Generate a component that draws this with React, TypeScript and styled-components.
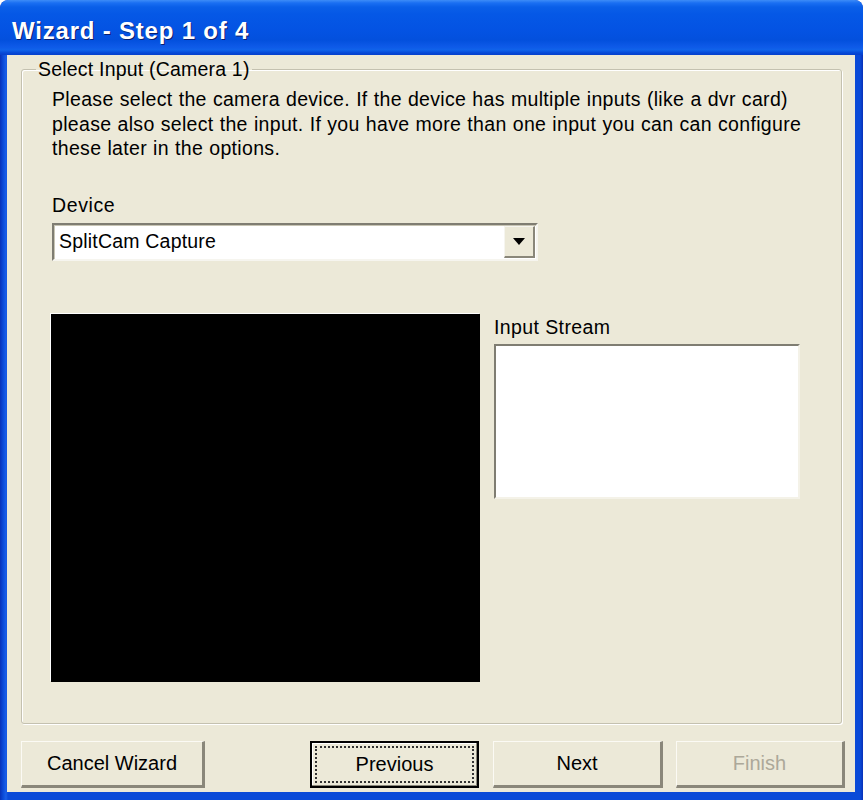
import { createGlobalStyle, styled } from "styled-components";

const GlobalStyle = createGlobalStyle`
  html, body {
    margin: 0;
    padding: 0;
    background: #ffffff;
  }
  body {
    font-family: "Liberation Sans", Arial, sans-serif;
  }
`;

const App = () => {
  return (
    <>
      <GlobalStyle />
      <Window>
        <TitleBar>
          <Title>Wizard - Step 1 of 4</Title>
        </TitleBar>
        <Body>
          <GroupBox>
            <Legend>Select Input (Camera 1)</Legend>
            <Intro>
              Please select the camera device. If the device has multiple inputs (like a dvr card)
              <br />
              please also select the input. If you have more than one input you can can configure
              <br />
              these later in the options.
            </Intro>
            <Label>Device</Label>
            <Combo>
              <ComboText>SplitCam Capture</ComboText>
              <DropButton>
                <svg width="12" height="7" viewBox="0 0 12 7">
                  <path d="M0 0 H12 L6 7 Z" fill="#000" />
                </svg>
              </DropButton>
            </Combo>
            <PreviewRow>
              <Preview />
              <StreamColumn>
                <StreamLabel>Input Stream</StreamLabel>
                <ListBox />
              </StreamColumn>
            </PreviewRow>
          </GroupBox>
          <ButtonRow>
            <Button $width={184}>Cancel Wizard</Button>
            <RightButtons>
              <Button $width={169} $default>
                <FocusRing>Previous</FocusRing>
              </Button>
              <Button $width={170}>Next</Button>
              <Button $width={169} $gap={13} disabled>
                Finish
              </Button>
            </RightButtons>
          </ButtonRow>
        </Body>
      </Window>
    </>
  );
};

export default App;

const Window = styled("div")({
  width: "863px",
  height: "800px",
  display: "flex",
  flexDirection: "column",
  background:
    "linear-gradient(90deg, #0831b8 0px, #0a4ad8 3px, #1a5fe8 6px, #0a4ad8 8px, #0a4ad8 calc(100% - 8px), #0a4ad8 calc(100% - 3px), #0831b8 100%)",
  borderRadius: "8px 8px 0 0",
  overflow: "hidden",
  boxSizing: "border-box",
});

const TitleBar = styled("div")({
  height: "55px",
  flexShrink: 0,
  display: "flex",
  alignItems: "center",
  padding: "0 0 0 12px",
  background:
    "linear-gradient(180deg, #3d8cf7 0px, #1a6ff2 3px, #0a5fe8 7px, #0558e6 14px, #0453e3 30px, #0350dd 40px, #0e5ae8 47px, #1063ea 50px, #0648d6 53px, #0640cc 55px)",
  borderRadius: "8px 8px 0 0",
});

const Title = styled("span")({
  color: "#ffffff",
  fontFamily: '"Liberation Sans", Arial, sans-serif',
  fontWeight: 700,
  fontSize: "24px",
  letterSpacing: "0.8px",
  textShadow: "1px 1px 0 #0a1e6e",
  marginTop: "7px",
});

const Body = styled("div")({
  flex: 1,
  margin: "0 8px 8px 7px",
  background: "#ece9d8",
  display: "flex",
  flexDirection: "column",
  padding: "3px 10px 4px 14px",
  boxSizing: "border-box",
});

const GroupBox = styled("fieldset")({
  margin: "0 3px 0 0",
  padding: "0 20px 40px 30px",
  border: "1px solid #c4c1b0",
  borderRadius: "3px",
  boxShadow: "1px 1px 0 #ffffff, inset 1px 1px 0 #ffffff",
  height: "666px",
  boxSizing: "border-box",
  display: "flex",
  flexDirection: "column",
  alignItems: "flex-start",
});

const Legend = styled("legend")({
  fontSize: "19.5px",
  lineHeight: "22px",
  letterSpacing: "0.2px",
  color: "#000",
  padding: "0 2px",
  marginLeft: "-16px",
});

const Intro = styled("p")({
  margin: "7px 0 0 0",
  fontSize: "19.5px",
  lineHeight: "24.5px",
  letterSpacing: "0.32px",
  wordSpacing: "0.4px",
  color: "#000",
  whiteSpace: "nowrap",
});

const Label = styled("div")({
  fontSize: "19.5px",
  lineHeight: "22px",
  letterSpacing: "0.6px",
  color: "#000",
  marginTop: "33px",
});

const StreamLabel = styled(Label)({
  marginTop: "2px",
  letterSpacing: "0.4px",
});

const Combo = styled("div")({
  marginTop: "7px",
  width: "486px",
  height: "38px",
  boxSizing: "border-box",
  background: "#ffffff",
  borderStyle: "solid",
  borderWidth: "2px",
  borderColor: "#7f7d72 #f6f5ef #f6f5ef #7f7d72",
  boxShadow: "inset 1px 1px 0 #c8c5b4",
  display: "flex",
  alignItems: "center",
  justifyContent: "space-between",
  padding: "0 1px 0 5px",
});

const ComboText = styled("span")({
  fontSize: "19.5px",
  letterSpacing: "0.2px",
  color: "#000",
});

const DropButton = styled("div")({
  width: "31px",
  height: "32px",
  boxSizing: "border-box",
  background: "#ece9d8",
  borderStyle: "solid",
  borderWidth: "1px 2px 2px 1px",
  borderColor: "#f6f5ef #8a877a #8a877a #f6f5ef",
  display: "flex",
  alignItems: "center",
  justifyContent: "center",
});

const PreviewRow = styled("div")({
  marginTop: "53px",
  display: "flex",
  gap: "14px",
  alignItems: "flex-start",
});

const Preview = styled("div")({
  width: "429px",
  height: "368px",
  marginLeft: "-1px",
  background: "#000000",
  boxShadow: "-1px -1px 0 #ffffff",
});

const StreamColumn = styled("div")({
  display: "flex",
  flexDirection: "column",
});

const ListBox = styled("div")({
  marginTop: "6px",
  width: "306px",
  height: "155px",
  boxSizing: "border-box",
  background: "#ffffff",
  borderStyle: "solid",
  borderWidth: "2px",
  borderColor: "#7f7d72 #f4f2e8 #f4f2e8 #7f7d72",
});

const ButtonRow = styled("div")({
  marginTop: "auto",
  display: "flex",
  justifyContent: "space-between",
  alignItems: "center",
});

const RightButtons = styled("div")({
  display: "flex",
  gap: "14px",
});

const Button = styled("button")<{ $width: number; $default?: boolean; $gap?: number }>(
  ({ $width, $default, $gap }) => ({
    width: `${$width}px`,
    height: "47px",
    marginLeft: $gap !== undefined ? `${$gap - 14}px` : 0,
    boxSizing: "border-box",
    background: "#ece9d8",
    fontFamily: '"Liberation Sans", Arial, sans-serif',
    fontSize: "20px",
    color: "#000",
    padding: $default ? "3px" : 0,
    borderStyle: "solid",
    borderWidth: $default ? "2px" : "1px 3px 3px 1px",
    borderColor: $default ? "#000" : "#fbfaf4 #8a877a #8a877a #fbfaf4",
    boxShadow: $default ? "inset -1px -1px 0 #8a877a, inset 1px 1px 0 #ffffff" : "none",
    "&:disabled": {
      color: "#aca899",
    },
  })
);

const FocusRing = styled("span")({
  display: "flex",
  alignItems: "center",
  justifyContent: "center",
  width: "100%",
  height: "100%",
  boxSizing: "border-box",
  border: "2px dotted #333",
});
